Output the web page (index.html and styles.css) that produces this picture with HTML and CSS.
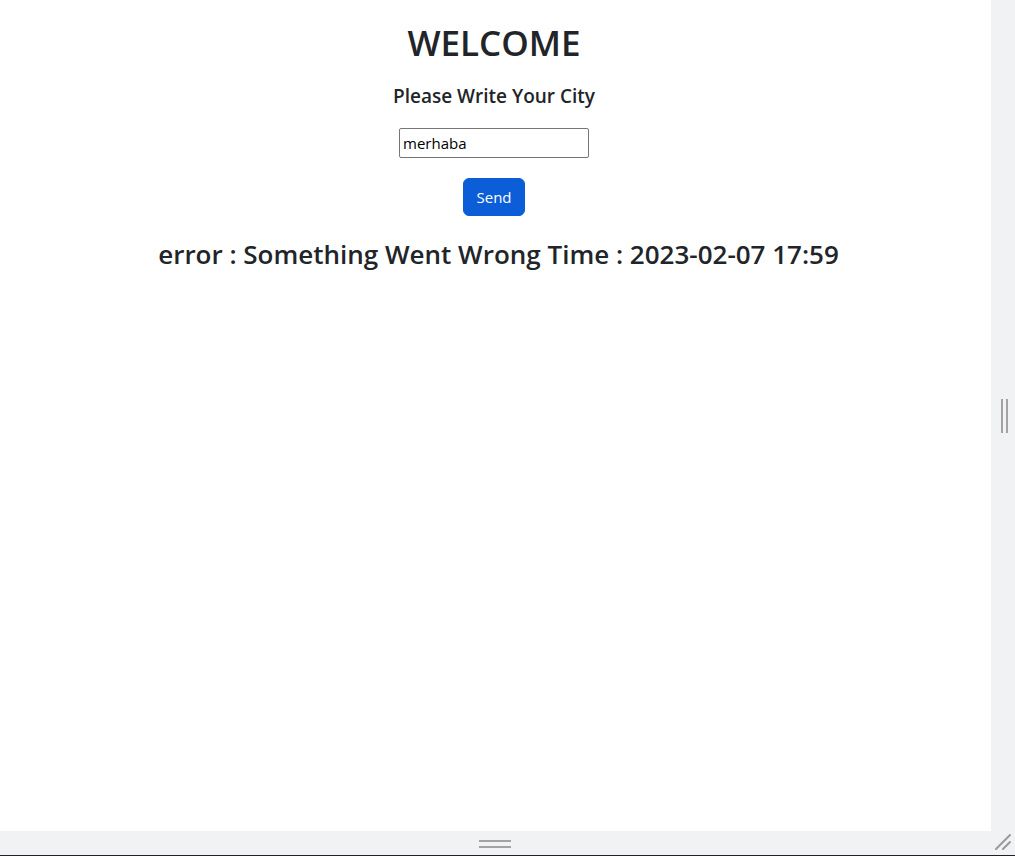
FILE: index.html
```html
<!DOCTYPE html>
<html lang="en">
<head>
<meta charset="utf-8">
<title>Weather</title>
<link rel="stylesheet" href="styles.css">
</head>
<body>
<div class="frame">
  <div class="row">
    <main class="page">
      <h1 class="title">WELCOME</h1>
      <h5 class="subtitle">Please Write Your City</h5>
      <input class="city" type="text" value="merhaba">
      <button class="btn" type="button">Send</button>
      <h3 class="result">error : Something Went Wrong Time : 2023-02-07 17:59</h3>
    </main>
    <div class="side">
      <span class="vgrip"></span>
    </div>
  </div>
  <div class="bottom">
    <span class="hgrip"></span>
    <svg class="corner" width="16" height="16" viewBox="0 0 16 16">
      <line x1="15" y1="1" x2="1" y2="15" stroke="#9a9a9a" stroke-width="2" stroke-linecap="round"/>
      <line x1="15" y1="8" x2="8" y2="15" stroke="#9a9a9a" stroke-width="2" stroke-linecap="round"/>
    </svg>
  </div>
</div>
</body>
</html>
```

FILE: styles.css
```css
* { box-sizing: border-box; }
html, body { margin: 0; padding: 0; background: #ffffff; }
body {
  font-family: "Open Sans", "Noto Sans", sans-serif;
  color: #212529;
}
.frame {
  width: 1015px;
  height: 856px;
  display: flex;
  flex-direction: column;
}
.row {
  display: flex;
  height: 831px;
}
.page {
  flex: 1;
  background: #fff;
  display: flex;
  flex-direction: column;
  align-items: center;
  padding-top: 22px;
  padding-right: 3px;
}
.title {
  margin: 0;
  font-size: 35px;
  font-weight: 600;
  line-height: 1.2;
}
.subtitle {
  margin: 21px 0 0;
  font-size: 19px;
  font-weight: 600;
  line-height: 1.2;
}
.city {
  margin-top: 20px;
  width: 190px;
  height: 30px;
  border: 1px solid #767676;
  border-radius: 2px;
  padding: 0 3px;
  font-family: inherit;
  font-size: 15px;
  color: #000;
}
.btn {
  margin-top: 20px;
  width: 62px;
  height: 38px;
  border: 1px solid #0b5ed7;
  border-radius: 6px;
  background: #0b5ed7;
  color: #fff;
  font-family: inherit;
  font-size: 15px;
}
.result {
  margin: 23px 0 0 9px;
  font-size: 26px;
  font-weight: 600;
  line-height: 1.2;
}
.side {
  width: 24px;
  background: #f1f2f4;
  display: flex;
  align-items: center;
  justify-content: center;
}
.vgrip {
  width: 7px;
  height: 34px;
  border-left: 2px solid #a3a3a3;
  border-right: 2px solid #a3a3a3;
  margin-left: 2px;
}
.bottom {
  height: 25px;
  background: #f1f2f4;
  border-bottom: 1px solid #202124;
  position: relative;
  display: flex;
  justify-content: center;
  padding-top: 9px;
}
.hgrip {
  width: 32px;
  height: 8px;
  border-top: 2px solid #a3a3a3;
  border-bottom: 2px solid #a3a3a3;
  margin-right: 25px;
}
.corner {
  position: absolute;
  right: 4px;
  bottom: 5px;
}
```
